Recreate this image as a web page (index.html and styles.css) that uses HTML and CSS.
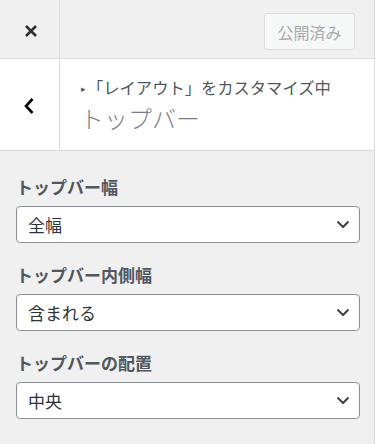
FILE: index.html
```html
<!DOCTYPE html>
<html lang="ja">
<head>
<meta charset="utf-8">
<link rel="stylesheet" href="styles.css">
</head>
<body>
<div class="panel">
  <div class="topbar">
    <div class="close">
      <svg width="14" height="14" viewBox="0 0 14 14"><path d="M2 2 L12 12 M12 2 L2 12" stroke="#2c3338" stroke-width="2.6" stroke-linecap="butt"/></svg>
    </div>
    <div class="actions">
      <button class="publish">公開済み</button>
    </div>
  </div>
  <div class="section-head">
    <div class="back">
      <svg width="12" height="18" viewBox="0 0 12 18"><path d="M9.5 2 L3 9 L9.5 16" fill="none" stroke="#000" stroke-width="2.6"/></svg>
    </div>
    <div class="titles">
      <div class="action"><span class="arrow">▸</span>「レイアウト」をカスタマイズ中</div>
      <div class="title">トップバー</div>
    </div>
  </div>
  <div class="controls">
    <div class="control">
      <div class="label">トップバー幅</div>
      <div class="select"><span>全幅</span><svg class="chev" width="14" height="9" viewBox="0 0 14 9"><path d="M1.5 1.5 L7 7 L12.5 1.5" fill="none" stroke="#3c434a" stroke-width="2"/></svg></div>
    </div>
    <div class="control">
      <div class="label">トップバー内側幅</div>
      <div class="select"><span>含まれる</span><svg class="chev" width="14" height="9" viewBox="0 0 14 9"><path d="M1.5 1.5 L7 7 L12.5 1.5" fill="none" stroke="#3c434a" stroke-width="2"/></svg></div>
    </div>
    <div class="control">
      <div class="label">トップバーの配置</div>
      <div class="select"><span>中央</span><svg class="chev" width="14" height="9" viewBox="0 0 14 9"><path d="M1.5 1.5 L7 7 L12.5 1.5" fill="none" stroke="#3c434a" stroke-width="2"/></svg></div>
    </div>
  </div>
</div>
</body>
</html>
```

FILE: styles.css
```css
html, body {
  margin: 0;
  padding: 0;
  background: #ffffff;
  font-family: "Noto Sans CJK JP", "Noto Sans", sans-serif;
}
.panel {
  width: 374px;
  height: 444px;
  background: #f0f0f1;
  border-right: 1px solid #dcdcde;
  display: flex;
  flex-direction: column;
}
.topbar {
  display: flex;
  height: 58px;
  border-bottom: 1px solid #dcdcde;
  background: #f0f0f1;
}
.close {
  width: 59px;
  border-right: 1px solid #dcdcde;
  display: flex;
  align-items: center;
  justify-content: center;
}
.close svg { margin-top: 4px; margin-left: 2px; }
.actions {
  flex: 1;
  display: flex;
  align-items: center;
  justify-content: flex-end;
  padding-right: 19px;
}
.publish {
  width: 91px;
  height: 37px;
  margin-top: 5px;
  background: #f6f7f7;
  border: 1px solid #dcdcde;
  border-radius: 3px;
  color: #a7aaad;
  font-family: "Noto Sans CJK JP", sans-serif;
  font-size: 16px;
  padding: 0;
}
.section-head {
  display: flex;
  height: 91px;
  background: #ffffff;
  border-bottom: 1px solid #dcdcde;
}
.back {
  width: 59px;
  border-right: 1px solid #dcdcde;
  display: flex;
  align-items: center;
  justify-content: center;
}
.back svg { margin-left: -2px; margin-top: 2px; }
.titles {
  flex: 1;
  padding: 17px 0 0 21px;
}
.action {
  font-size: 16.3px;
  line-height: 22px;
  color: #50575e;
}
.arrow {
  font-size: 9px;
  color: #50575e;
  display: inline-block;
  vertical-align: 2px;
  margin-right: 1px;
}
.title {
  font-size: 24px;
  font-weight: 300;
  line-height: 32px;
  color: #7a7e84;
  margin-top: 2px;
  margin-left: -1px;
}
.controls {
  padding: 24px 0 0 16px;
  display: flex;
  flex-direction: column;
  gap: 20px;
}
.control {
  display: flex;
  flex-direction: column;
  gap: 7px;
}
.label {
  font-size: 17px;
  font-weight: 700;
  line-height: 24px;
  color: #50575e;
}
.select {
  width: 342px;
  height: 35px;
  box-sizing: content-box;
  background: #ffffff;
  border: 1px solid #8c8f94;
  border-radius: 4px;
  display: flex;
  align-items: center;
  justify-content: space-between;
}
.select span {
  font-size: 17px;
  color: #2c3338;
  padding-left: 11px;
  line-height: 24px;
}
.chev {
  margin-right: 9px;
}
```
